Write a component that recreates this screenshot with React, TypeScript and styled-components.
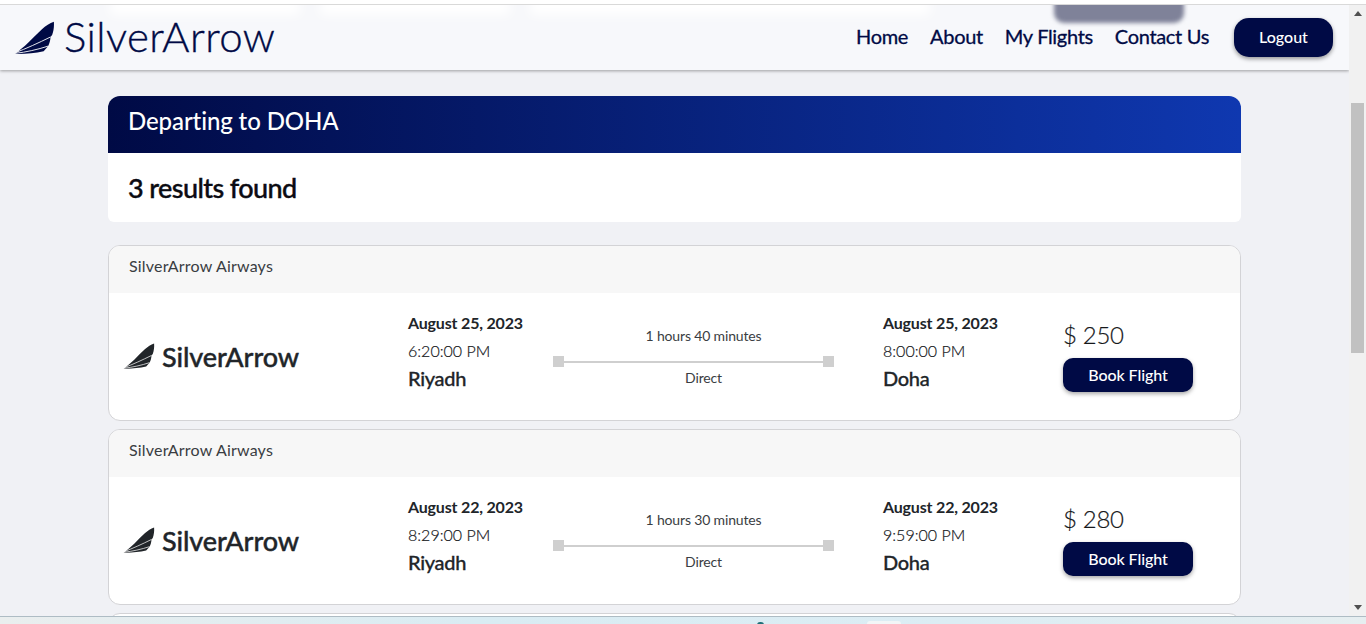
import styled, { createGlobalStyle } from "styled-components";

const navy = "#000a45";

const GlobalStyle = createGlobalStyle`
  html, body {
    margin: 0;
    padding: 0;
    height: 100%;
    overflow: hidden;
    background: #f0f1f5;
    font-family: Lato, "Open Sans", sans-serif;
    color: #212529;
  }
  * { box-sizing: border-box; }
`;

const Page = styled.div`
  width: 1366px;
  height: 624px;
  display: flex;
  flex-direction: column;
  overflow: hidden;
`;

const TopEdge = styled.div`
  flex: none;
  height: 5px;
  background: #fff;
  border-bottom: 1px solid #d9d9d9;
`;

const Middle = styled.div`
  flex: 1;
  min-height: 0;
  display: flex;
`;

const Viewport = styled.main`
  flex: 1;
  min-width: 0;
  overflow: hidden;
`;

const NavBar = styled.header`
  position: relative;
  height: 65px;
  display: flex;
  align-items: center;
  justify-content: space-between;
  padding: 0 16px 0 14px;
  background: #f7f8fb;
  box-shadow: 0 1px 3px rgba(0, 0, 0, 0.35);
  overflow: hidden;
`;

const GhostPill = styled.div`
  position: absolute;
  left: 1054px;
  top: -12px;
  width: 130px;
  height: 30px;
  border-radius: 10px;
  background: #7f8299;
  filter: blur(2px);
`;

const GhostStrip = styled.div<{ $left: number; $width: number }>`
  position: absolute;
  left: ${(p) => p.$left}px;
  top: -10px;
  width: ${(p) => p.$width}px;
  height: 20px;
  background: #fff;
  filter: blur(6px);
`;

const Brand = styled.div`
  position: relative;
  display: flex;
  align-items: center;
  gap: 10px;
  color: ${navy};
`;

const BrandName = styled.span`
  font-size: 42px;
  font-weight: 300;
  line-height: 48px;
  letter-spacing: 0.4px;
  margin: -3px 0 0 -1px;
  -webkit-text-stroke: 0.35px ${navy};
`;

const NavRight = styled.nav`
  position: relative;
  display: flex;
  align-items: center;
  margin-top: -2px;
`;

const NavLink = styled.a`
  margin: -2px 22px 0 0;
  font-size: 20px;
  font-weight: 400;
  letter-spacing: -0.32px;
  color: ${navy};
  -webkit-text-stroke: 0.3px ${navy};
`;

const LogoutButton = styled.button`
  width: 99px;
  height: 39px;
  margin: 2px 0 0 3px;
  padding: 0 0 2px;
  border: none;
  border-radius: 15px;
  background: ${navy};
  color: #fff;
  font: 500 16px Lato, sans-serif;
  box-shadow: 0 2px 4px rgba(0, 0, 0, 0.4);
`;

const Content = styled.div`
  width: 1133px;
  margin: 26px 0 0 108px;
  display: flex;
  flex-direction: column;
`;

const ResultsPanel = styled.section`
  background: #fff;
  border-radius: 12px 12px 6px 6px;
  margin-bottom: 23px;
`;

const ResultsHeader = styled.h1`
  margin: 0;
  height: 57px;
  padding: 0 20px 8px;
  display: flex;
  align-items: center;
  border-radius: 12px 12px 0 0;
  background: linear-gradient(90deg, #000a45 0%, #0f38b0 100%);
  color: #fff;
  font-size: 24px;
  font-weight: 500;
  letter-spacing: -0.1px;
`;

const ResultsCount = styled.h2`
  margin: 0;
  height: 69px;
  padding: 0 20px;
  display: flex;
  align-items: center;
  font-size: 27px;
  font-weight: 500;
  letter-spacing: -0.6px;
  color: #0b0b12;
  -webkit-text-stroke: 0.4px #0b0b12;
`;

const FlightCard = styled.article`
  flex: none;
  height: 176px;
  margin-bottom: 8px;
  background: #fff;
  border: 1px solid #d3d3d6;
  border-radius: 12px;
  overflow: hidden;
`;

const CardTitle = styled.div`
  height: 47px;
  padding: 0 20px 9px;
  display: flex;
  align-items: center;
  background: #f7f7f7;
  font-size: 16px;
  letter-spacing: 0.2px;
  color: #3a3d42;
`;

const CardBody = styled.div`
  height: 127px;
  padding-left: 14px;
  display: grid;
  grid-template-columns: 285px 145px 281px 229px 1fr;
  align-items: center;
`;

const AirlineLogo = styled.div`
  display: flex;
  align-items: center;
  gap: 7px;
  color: #212529;
`;

const AirlineName = styled.span`
  font-size: 27px;
  font-weight: 500;
  letter-spacing: -0.1px;
  -webkit-text-stroke: 0.4px #212529;
`;

const Stop = styled.div<{ $inset?: number }>`
  display: flex;
  flex-direction: column;
  margin-top: -12px;
  padding-left: ${(p) => p.$inset ?? 0}px;
`;

const StopDate = styled.span`
  font-size: 16px;
  font-weight: 700;
  line-height: 28px;
  letter-spacing: -0.18px;
`;

const StopTime = styled.span`
  font-size: 16px;
  font-weight: 300;
  line-height: 28px;
  color: #16181b;
  -webkit-text-stroke: 0.2px #16181b;
`;

const StopCity = styled.span`
  margin: -1px 0 1px;
  font-size: 20px;
  font-weight: 500;
  line-height: 28px;
  letter-spacing: -0.3px;
  -webkit-text-stroke: 0.3px #212529;
`;

const Route = styled.div`
  display: flex;
  flex-direction: column;
  align-items: center;
  margin-top: 1px;
  color: #3a3d42;
  font-size: 14px;
  line-height: 18px;
`;

const RouteText = styled.span`
  padding-left: 20px;
  letter-spacing: -0.15px;
`;

const RouteLine = styled.div`
  align-self: stretch;
  display: flex;
  align-items: center;
  margin: 11px 0 2px;
`;

const RouteDot = styled.span`
  flex: none;
  width: 11px;
  height: 11px;
  background: #cfcfcf;
`;

const RouteBar = styled.span`
  flex: 1;
  height: 2px;
  background: #cfcfcf;
`;

const Fare = styled.div`
  display: flex;
  flex-direction: column;
  align-items: flex-start;
  margin-top: -1px;
`;

const Price = styled.span`
  font-size: 24px;
  font-weight: 300;
  line-height: 30px;
  margin-bottom: 8px;
  letter-spacing: -0.3px;
  color: #16181b;
  -webkit-text-stroke: 0.2px #16181b;
`;

const BookButton = styled.button`
  width: 130px;
  height: 34px;
  padding: 0 0 2px;
  border: none;
  border-radius: 10px;
  background: ${navy};
  color: #fff;
  font: 500 16px Lato, sans-serif;
  letter-spacing: -0.1px;
  box-shadow: 0 2px 4px rgba(0, 0, 0, 0.35);
`;

const Scrollbar = styled.aside`
  flex: none;
  width: 17px;
  display: flex;
  flex-direction: column;
  align-items: center;
  justify-content: space-between;
  background: #f1f1f1;
  position: relative;
`;

const ScrollArrow = styled.span<{ $down?: boolean }>`
  width: 0;
  height: 0;
  margin: 6px 0;
  border-left: 4px solid transparent;
  border-right: 4px solid transparent;
  ${(p) =>
    p.$down ? "border-top: 5px solid #505050;" : "border-bottom: 5px solid #505050;"}
`;

const ScrollThumb = styled.div`
  position: absolute;
  top: 98px;
  left: 2px;
  width: 13px;
  height: 250px;
  background: #c1c1c1;
`;

const DesktopStrip = styled.div`
  flex: none;
  position: relative;
  height: 8px;
  border-top: 1px solid #aebcc4;
  background: linear-gradient(90deg, #eaeeee 0%, #d9ecf3 35%, #dcedf4 70%, #e6eef0 100%);
`;

const TrayDot = styled.span`
  position: absolute;
  left: 757px;
  top: 5px;
  width: 7px;
  height: 3px;
  border-radius: 4px 4px 0 0;
  background: #1f6f78;
`;

const TrayTab = styled.span`
  position: absolute;
  left: 867px;
  top: 4px;
  width: 34px;
  height: 4px;
  border-radius: 3px 3px 0 0;
  background: #f2f6f7;
`;

const WingIcon = ({ size, color, line }: { size: number; color: string; line: string }) => (
  <svg width={size} height={size * 0.82} viewBox="0 0 40 33" aria-hidden="true">
    <path
      fill={color}
      d="M39 0.7C39.4 5 38.8 10 37.3 13.7L35.7 15.7C35.6 18.8 34.8 22 33.3 24.7L29 29.7C20 31.6 10 32.6 0.7 32.3C5 29 9.6 25.2 14 21C18.6 16.6 22.8 12.2 27.3 8C31 4.6 35 2 39 0.7Z"
    />
    <path fill="none" stroke={line} strokeWidth="0.9" d="M0.7 31.3C12 27 24 21.5 35.7 15.7" />
    <path fill="none" stroke={line} strokeWidth="0.9" d="M0.7 31.8C12 30.6 23 28 33.3 24.7" />
  </svg>
);

const flights = [
  { id: 1, date: "August 25, 2023", depart: "6:20:00 PM", arrive: "8:00:00 PM", length: "1 hours 40 minutes", price: 250 },
  { id: 2, date: "August 22, 2023", depart: "8:29:00 PM", arrive: "9:59:00 PM", length: "1 hours 30 minutes", price: 280 },
];

const App = () => {
  return (
    <Page>
      <GlobalStyle />
      <TopEdge />
      <Middle>
        <Viewport>
          <NavBar>
            <GhostStrip $left={110} $width={190} />
            <GhostStrip $left={320} $width={190} />
            <GhostStrip $left={530} $width={400} />
            <GhostPill />
            <Brand>
              <WingIcon size={41} color={navy} line="#f7f8fb" />
              <BrandName>SilverArrow</BrandName>
            </Brand>
            <NavRight>
              <NavLink>Home</NavLink>
              <NavLink>About</NavLink>
              <NavLink>My Flights</NavLink>
              <NavLink>Contact Us</NavLink>
              <LogoutButton>Logout</LogoutButton>
            </NavRight>
          </NavBar>
          <Content>
            <ResultsPanel>
              <ResultsHeader>Departing to DOHA</ResultsHeader>
              <ResultsCount>3 results found</ResultsCount>
            </ResultsPanel>
            {flights.map((flight) => (
              <FlightCard key={flight.id}>
                <CardTitle>SilverArrow Airways</CardTitle>
                <CardBody>
                  <AirlineLogo>
                    <WingIcon size={32} color="#212529" line="#ffffff" />
                    <AirlineName>SilverArrow</AirlineName>
                  </AirlineLogo>
                  <Stop>
                    <StopDate>{flight.date}</StopDate>
                    <StopTime>{flight.depart}</StopTime>
                    <StopCity>Riyadh</StopCity>
                  </Stop>
                  <Route>
                    <RouteText>{flight.length}</RouteText>
                    <RouteLine>
                      <RouteDot />
                      <RouteBar />
                      <RouteDot />
                    </RouteLine>
                    <RouteText>Direct</RouteText>
                  </Route>
                  <Stop $inset={49}>
                    <StopDate>{flight.date}</StopDate>
                    <StopTime>{flight.arrive}</StopTime>
                    <StopCity>Doha</StopCity>
                  </Stop>
                  <Fare>
                    <Price>$ {flight.price}</Price>
                    <BookButton>Book Flight</BookButton>
                  </Fare>
                </CardBody>
              </FlightCard>
            ))}
            <FlightCard />
          </Content>
        </Viewport>
        <Scrollbar>
          <ScrollArrow />
          <ScrollThumb />
          <ScrollArrow $down />
        </Scrollbar>
      </Middle>
      <DesktopStrip>
        <TrayDot />
        <TrayTab />
      </DesktopStrip>
    </Page>
  );
};

export default App;
